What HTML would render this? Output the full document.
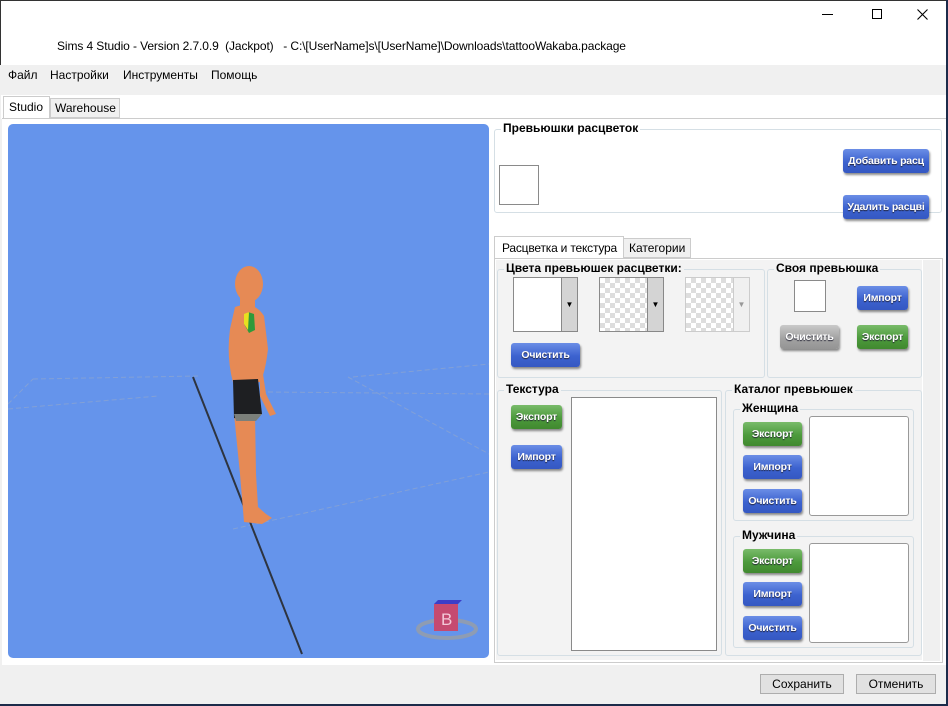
<!DOCTYPE html>
<html><head><meta charset="utf-8"><style>
*{box-sizing:border-box;margin:0;padding:0}
body{width:948px;height:706px;position:relative;overflow:hidden;background:#f0f0f0;font-family:"Liberation Sans","DejaVu Sans",sans-serif;font-size:12px;color:#000}
.a{position:absolute}
.grp{position:absolute;border:1px solid #d5dfe5;border-radius:3px;background:#f3f3f3}
.gt{position:absolute;top:-9px;left:6px;background:#f3f3f3;padding:0 2px;font-weight:bold;font-size:12px;white-space:nowrap}
.btn{position:absolute;height:24px;border-radius:3px;color:#fff;font-weight:bold;font-size:10.5px;letter-spacing:-0.2px;text-align:center;line-height:24px;text-shadow:0 1px 1px #223;box-shadow:1px 2px 2px rgba(0,0,0,.45);white-space:nowrap;overflow:hidden}
.b{background:linear-gradient(#6b8ee6,#3c62cf 55%,#3558c2)}
.g{background:linear-gradient(#79bb6a,#4c9a3c 55%,#41892f)}
.s{background:linear-gradient(#c9c9c9,#a3a3a3 55%,#949494)}
.box{position:absolute;background:#fff;border:1px solid #8a8a8a}
.chk{background-color:#fff;background-image:linear-gradient(45deg,#ddd 25%,transparent 25%,transparent 75%,#ddd 75%),linear-gradient(45deg,#ddd 25%,transparent 25%,transparent 75%,#ddd 75%);background-size:10px 10px;background-position:0 0,5px 5px}
.wb{position:absolute;height:20px;border:1px solid #adadad;background:#e1e1e1;font-size:12px;text-align:center;line-height:18px}
</style></head><body>
<div class="a" style="left:0;top:0;width:948px;height:65px;background:#fff;border-top:1px solid #333;border-left:1px solid #333"></div>
<div class="a" style="right:0;top:0;width:2px;height:706px;background:#1c2b4a"></div>
<div class="a" style="left:0;bottom:0;width:948px;height:2px;background:#1c2b4a"></div>
<div class="a" style="left:57px;top:39px;font-size:12px;letter-spacing:-0.1px">Sims 4 Studio - Version 2.7.0.9 &nbsp;(Jackpot) &nbsp; - C:\[UserName]s\[UserName]\Downloads\tattooWakaba.package</div>
<div class="a" style="left:822px;top:14px;width:11px;height:1px;background:#000"></div>
<div class="a" style="left:872px;top:9px;width:10px;height:10px;border:1px solid #000"></div>
<svg class="a" style="left:917px;top:9px" width="11" height="11"><path d="M0.5 0.5L10.5 10.5M10.5 0.5L0.5 10.5" stroke="#000" stroke-width="1.1"/></svg>
<div class="a" style="left:0;top:65px;width:946px;height:30px;background:#f0f0f0"></div>
<div class="a" style="left:1px;top:95px;width:945px;height:24px;background:#fff"></div>
<div class="a" style="left:8px;top:68px">Файл</div>
<div class="a" style="left:50px;top:68px">Настройки</div>
<div class="a" style="left:123px;top:68px">Инструменты</div>
<div class="a" style="left:211px;top:68px">Помощь</div>
<div class="a" style="left:3px;top:96px;width:47px;height:23px;background:#fff;border:1px solid #ccc;border-bottom:none;padding:3px 0 0 5px">Studio</div>
<div class="a" style="left:50px;top:98px;width:70px;height:20px;background:#f0f0f0;border:1px solid #ccc;padding:2px 0 0 4px">Warehouse</div>
<div class="a" style="left:2px;top:118px;width:944px;height:547px;background:#fff;border-top:1px solid #ccc"></div>
<!-- viewport -->
<svg class="a" style="left:8px;top:124px" width="481" height="534">
<rect x="0" y="0" width="481" height="534" rx="5" fill="#6594eb"/>
<g stroke="#8aa4d2" stroke-width="1" stroke-dasharray="5,3" fill="none" opacity="0.8">
<line x1="0" y1="285" x2="150" y2="272"/><line x1="260" y1="268" x2="481" y2="270"/>
<line x1="0" y1="280" x2="25" y2="255"/><line x1="25" y1="255" x2="190" y2="252"/>
<line x1="345" y1="253" x2="481" y2="240"/>
<line x1="340" y1="253" x2="481" y2="330"/>
<line x1="225" y1="405" x2="481" y2="348"/>
</g>
<line x1="185" y1="253" x2="294" y2="530" stroke="#2e3440" stroke-width="2"/>
<g fill="#e68a55">
<ellipse cx="241" cy="160" rx="14" ry="18"/>
<rect x="232" y="170" width="15" height="15"/>
<path d="M227 183 Q246 176 256 192 L260 225 Q257 250 252 258 L226 262 Q218 235 222 205 Z"/>
<path d="M225 205 Q220 230 224 245 L229 245 Z"/>
<path d="M252 230 L258 270 L268 290 L262 292 L252 272 Z"/>
<path d="M226 290 L247 290 L248 350 L250 383 L258 390 L264 394 L254 400 L236 398 L232 350 Z"/>
</g>
<path d="M240 188 L246 190 L247 206 L241 209 L236 200 Z" fill="#2e9a3a"/><path d="M236 190 L241 188 L240 206 L236 200 Z" fill="#e8e020"/>
<path d="M225 256 L250 255 L254 290 L240 296 L226 294 Z" fill="#1e1f22"/>
<path d="M226 290 L254 290 L248 297 L228 297 Z" fill="#7b7f7a"/>
<ellipse cx="439" cy="505" rx="29" ry="9" fill="none" stroke="#8e9cb3" stroke-width="4"/>
<rect x="426" y="480" width="24" height="27" fill="#c54a70"/>
<path d="M426 480 L430 476 L454 476 L450 480Z" fill="#3b3ec8"/>
<text x="433" y="501" font-size="17" fill="#f3c8d8" font-family="Liberation Sans">B</text>
</svg>
<div class="grp" style="left:494px;top:129px;width:448px;height:84px;background:#fff"><div class="gt" style="background:#fff">Превьюшки расцветок</div></div>
<div class="box" style="left:499px;top:165px;width:40px;height:40px"></div>
<div class="btn b" style="left:843px;top:149px;width:86px">Добавить расц</div>
<div class="btn b" style="left:843px;top:195px;width:86px">Удалить расцві</div>
<div class="a" style="left:494px;top:236px;width:130px;height:23px;background:#fff;border:1px solid #ccc;border-bottom:none;padding:4px 0 0 7px;letter-spacing:-0.2px">Расцветка и текстура</div>
<div class="a" style="left:623px;top:238px;width:68px;height:20px;background:#f0f0f0;border:1px solid #ccc;padding:2px 0 0 5px">Категории</div>
<div class="a" style="left:494px;top:258px;width:449px;height:405px;background:#fff;border:1px solid #ccc"></div>
<div class="a" style="left:923px;top:260px;width:17px;height:401px;background:#f0f0f0"></div>
<div class="a" style="left:496px;top:260px;width:426px;height:400px;background:#f3f3f3"></div>
<div class="grp" style="left:497px;top:269px;width:268px;height:109px"><div class="gt">Цвета превьюшек расцветки:</div></div>
<div class="box" style="left:513px;top:277px;width:65px;height:55px"></div><div class="a" style="left:561px;top:277px;width:17px;height:55px;background:#d4d4d4;border:1px solid #888;font-size:8px;text-align:center;line-height:53px">▼</div>
<div class="box chk" style="left:599px;top:277px;width:65px;height:55px"></div><div class="a" style="left:647px;top:277px;width:17px;height:55px;background:#d4d4d4;border:1px solid #888;font-size:8px;text-align:center;line-height:53px">▼</div>
<div class="box chk" style="left:685px;top:277px;width:65px;height:55px;border-color:#ccc"></div><div class="a" style="left:733px;top:277px;width:17px;height:55px;background:#f0f0f0;border:1px solid #ccc;font-size:8px;color:#999;text-align:center;line-height:53px">▼</div>
<div class="btn b" style="left:511px;top:343px;width:69px">Очистить</div>
<div class="grp" style="left:767px;top:269px;width:155px;height:109px"><div class="gt">Своя превьюшка</div></div>
<div class="box" style="left:794px;top:280px;width:32px;height:32px"></div>
<div class="btn b" style="left:857px;top:286px;width:51px">Импорт</div>
<div class="btn s" style="left:780px;top:325px;width:59px">Очистить</div>
<div class="btn g" style="left:857px;top:325px;width:51px">Экспорт</div>
<div class="grp" style="left:497px;top:390px;width:225px;height:266px"><div class="gt">Текстура</div></div>
<div class="btn g" style="left:511px;top:405px;width:51px">Экспорт</div>
<div class="btn b" style="left:511px;top:445px;width:51px">Импорт</div>
<div class="box" style="left:571px;top:397px;width:146px;height:254px"></div>
<div class="grp" style="left:725px;top:390px;width:197px;height:266px"><div class="gt">Каталог превьюшек</div></div>
<div class="grp" style="left:733px;top:409px;width:181px;height:112px"><div class="gt">Женщина</div></div>
<div class="btn g" style="left:743px;top:422px;width:59px">Экспорт</div>
<div class="btn b" style="left:743px;top:455px;width:59px">Импорт</div>
<div class="btn b" style="left:743px;top:489px;width:59px">Очистить</div>
<div class="box" style="left:809px;top:416px;width:100px;height:100px;border-color:#999;border-radius:3px"></div>
<div class="grp" style="left:733px;top:536px;width:181px;height:112px"><div class="gt">Мужчина</div></div>
<div class="btn g" style="left:743px;top:549px;width:59px">Экспорт</div>
<div class="btn b" style="left:743px;top:582px;width:59px">Импорт</div>
<div class="btn b" style="left:743px;top:616px;width:59px">Очистить</div>
<div class="box" style="left:809px;top:543px;width:100px;height:100px;border-color:#999;border-radius:3px"></div>
<div class="wb" style="left:760px;top:674px;width:84px">Сохранить</div>
<div class="wb" style="left:856px;top:674px;width:80px">Отменить</div>
</body></html>
